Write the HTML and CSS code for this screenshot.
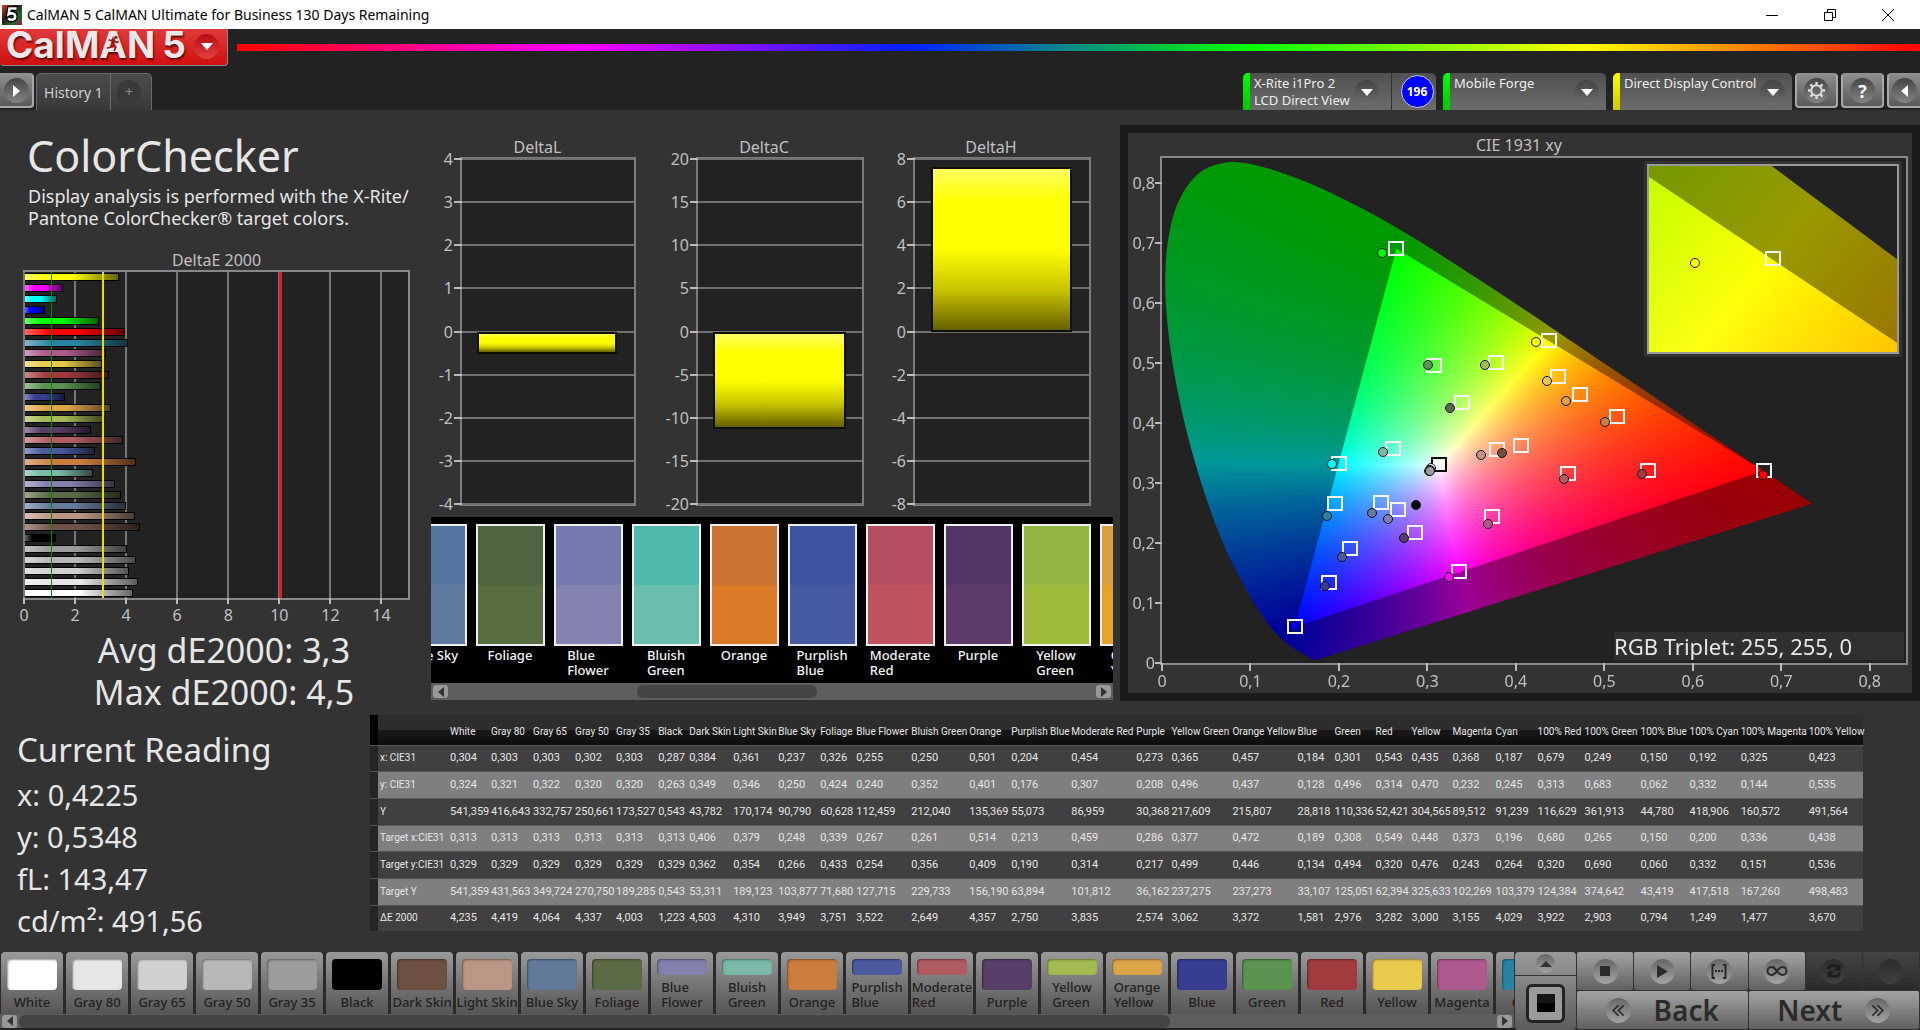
FILE: index.html
```html
<!DOCTYPE html>
<html lang="en">
<head>
<meta charset="utf-8">
<title>CalMAN 5</title>
<link rel="stylesheet" href="styles.css">
</head>
<body>
<header class="titlebar">
  <svg class="app-icon" viewBox="0 0 20 20" aria-hidden="true">
    <defs><linearGradient id="ai" x1="0" y1="0" x2="1" y2="1"><stop offset="0" stop-color="#e33a1c"/><stop offset=".4" stop-color="#2c1a16"/><stop offset=".7" stop-color="#1c6b2a"/><stop offset="1" stop-color="#a01a4a"/></linearGradient></defs>
    <rect width="20" height="20" fill="url(#ai)"/>
    <path d="M14.500 3.500H7.500L6.600 9.200c2.400-1.400 6.600-1.200 6.600 2.300 0 3.600-4.400 4.200-7 2" fill="none" stroke="#000" stroke-width="5"/>
    <path d="M14.500 3.500H7.500L6.600 9.200c2.400-1.400 6.600-1.200 6.600 2.300 0 3.600-4.400 4.200-7 2" fill="none" stroke="#fff" stroke-width="2.600"/>
  </svg>
  <span class="titlebar-text">CalMAN 5 CalMAN Ultimate for Business 130 Days Remaining</span>
  <div class="window-buttons">
    <button type="button" aria-label="Minimize"><svg viewBox="0 0 14 14"><path d="M1 7.500h12"/></svg></button>
    <button type="button" aria-label="Restore"><svg viewBox="0 0 14 14"><path d="M1.500 4.500h8v8h-8zM4.500 4.500v-3h8v8h-3"/></svg></button>
    <button type="button" aria-label="Close"><svg viewBox="0 0 14 14"><path d="M1 1l12 12M13 1L1 13"/></svg></button>
  </div>
</header>

<div class="brandbar">
  <button type="button" class="logo">
    <span class="logo-word">CalMAN</span>
    <span class="logo-five">5</span>
    <svg class="runner" viewBox="0 0 16 18" aria-hidden="true"><path d="M10 4L6 6 3.500 5M9 5L8 10l3 3-2 4M8 10l-3 3-3.500 1M9 6l3 2 2-1" fill="none" stroke="#a31515" stroke-width="1.800"/><circle cx="11" cy="2.500" r="1.800" fill="#a31515"/></svg>
    <span class="logo-drop"><span class="tri-down"></span></span>
  </button>
  <div class="spectrum"></div>
</div>

<nav class="tabbar">
  <button type="button" class="sq-btn sq-left" aria-label="Open panel"><span class="dot"><span class="tri-right"></span></span></button>
  <div class="tabs">
    <button type="button" class="tab">History 1</button>
    <button type="button" class="tab tab-add" aria-label="Add tab"><span class="add-dot">+</span></button>
  </div>
  <div class="devices">
    <div class="device device-meter">
      <i class="status status-green"></i>
      <button type="button" class="device-main"><span class="device-text">X-Rite i1Pro 2<br>LCD Direct View</span><span class="drop"><span class="tri-down"></span></span></button>
      <span class="count-cell"><span class="count">196</span></span>
    </div>
    <div class="device device-source">
      <i class="status status-green"></i>
      <button type="button" class="device-main"><span class="device-text">Mobile Forge</span><span class="drop"><span class="tri-down"></span></span></button>
    </div>
    <div class="device device-display">
      <i class="status status-yellow"></i>
      <button type="button" class="device-main"><span class="device-text">Direct Display Control</span><span class="drop"><span class="tri-down"></span></span></button>
    </div>
    <button type="button" class="sq-btn" aria-label="Settings"><span class="dot"><svg viewBox="0 0 20 20" class="gear"><circle cx="10" cy="10" r="5.500" fill="none" stroke-width="2"/><path d="M10 1v3M10 16v3M1 10h3M16 10h3M3.600 3.600l2.200 2.200M14.200 14.200l2.200 2.200M3.600 16.400l2.200-2.200M14.200 5.800l2.200-2.200" stroke-width="2.500"/></svg></span></button>
    <button type="button" class="sq-btn" aria-label="Help"><span class="dot help">?</span></button>
    <button type="button" class="sq-btn sq-right" aria-label="Collapse panel"><span class="dot"><span class="tri-left"></span></span></button>
  </div>
</nav>

<main class="workspace">
  <div class="top-row">
    <section class="summary">
      <h1>ColorChecker</h1>
      <p class="lead">Display analysis is performed with the X-Rite/<br>Pantone ColorChecker® target colors.</p>
      <h2 class="chart-title">DeltaE 2000</h2>
      <div class="de-plot" id="de-plot"></div>
      <p class="stat">Avg dE2000: 3,3</p>
      <p class="stat">Max dE2000: 4,5</p>
    </section>

    <section class="middle">
      <div class="deltas" id="deltas"></div>
      <div class="compare">
        <div class="compare-track" id="compare"></div>
        <div class="scroll compare-scroll">
          <button type="button" class="scroll-btn" aria-label="Scroll left"><span class="tri-left"></span></button>
          <div class="scroll-track"><div class="scroll-thumb"></div></div>
          <button type="button" class="scroll-btn" aria-label="Scroll right"><span class="tri-right"></span></button>
        </div>
      </div>
    </section>

    <section class="cie">
      <h2 class="chart-title">CIE 1931 xy</h2>
      <div class="cie-plot" id="cie-plot">
        <canvas id="cie-canvas"></canvas>
        <div class="cie-inset" id="cie-inset"><canvas id="inset-canvas"></canvas></div>
        <div class="triplet">RGB Triplet: 255, 255, 0</div>
      </div>
    </section>
  </div>

  <div class="bottom-row">
    <section class="reading">
      <h2>Current Reading</h2>
      <p>x: 0,4225</p>
      <p>y: 0,5348</p>
      <p>fL: 143,47</p>
      <p>cd/m²: 491,56</p>
    </section>
    <div class="table-wrap"><table class="data" id="data"></table></div>
  </div>
</main>

<footer class="dock">
  <div class="patches">
    <div class="patch-row" id="patches"></div>
    <div class="scroll patch-scroll">
      <button type="button" class="scroll-btn" aria-label="Scroll left"><span class="tri-left"></span></button>
      <div class="scroll-track"><div class="scroll-thumb"></div></div>
      <button type="button" class="scroll-btn" aria-label="Scroll right"><span class="tri-right"></span></button>
    </div>
  </div>
  <div class="current">
    <button type="button" class="current-up" aria-label="Expand"><span class="round"><span class="tri-up"></span></span></button>
    <button type="button" class="current-patch" aria-label="Current pattern"><span class="pattern"><i></i></span></button>
  </div>
  <div class="transport">
    <button type="button" aria-label="Stop"><span class="round"><svg viewBox="0 0 24 24"><path d="M7 7h10v10H7z"/></svg></span></button>
    <button type="button" aria-label="Play"><span class="round"><svg viewBox="0 0 24 24"><path d="M7 6l11 6.500L7 19z"/></svg></span></button>
    <button type="button" aria-label="Read series"><span class="round"><svg viewBox="0 0 24 24"><path d="M8 6H5.500v13H8M16 6h2.500v13H16" fill="none" stroke="#2b2b2b" stroke-width="2"/><path d="M8 11h2v2H8zM11 11h2v2h-2zM14 11h2v2h-2z"/></svg></span></button>
    <button type="button" aria-label="Read continuous"><span class="round"><svg viewBox="0 0 24 24"><path d="M12 12c-2-3-3.500-4-5.500-4a4 4 0 0 0 0 8c2 0 3.500-1 5.500-4zM12 12c2-3 3.500-4 5.500-4a4 4 0 0 1 0 8c-2 0-3.500-1-5.500-4z" fill="none" stroke="#2b2b2b" stroke-width="2"/></svg></span></button>
    <button type="button" class="off" aria-label="Refresh"><span class="round"><svg viewBox="0 0 24 24"><path d="M6 10c1-3.500 7-5 11-1.500M18 14c-1 3.500-7 5-11 1.500" fill="none" stroke="#1c1c1c" stroke-width="2.600"/><path d="M18.500 4.500v7h-7zM5.500 19.500v-7h7z" fill="#1c1c1c"/></svg></span></button>
    <button type="button" class="off" aria-label="Record"><span class="round"></span></button>
    <button type="button" class="step"><span class="round"><svg viewBox="0 0 24 24"><path d="M12 6l-6 6 6 6M18 6l-6 6 6 6" fill="none" stroke="#2b2b2b" stroke-width="2"/></svg></span><span>Back</span></button>
    <button type="button" class="step"><span>Next</span><span class="round"><svg viewBox="0 0 24 24"><path d="M12 6l6 6-6 6M6 6l6 6-6 6" fill="none" stroke="#2b2b2b" stroke-width="2"/></svg></span></button>
  </div>
</footer>
<script src="app.js"></script>
</body>
</html>
```
FILE: styles.css
```css
* { box-sizing: border-box; }
body {
  margin: 0;
  min-height: 100vh;
  display: flex;
  flex-direction: column;
  background: #333;
  color: #e6e6e6;
  font-family: "Noto Sans", "Open Sans", sans-serif;
  overflow-x: hidden;
}
button { font: inherit; color: inherit; border: 0; padding: 0; margin: 0; background: none; }
h1, h2, p { margin: 0; font-weight: 400; }

/* Title bar */
.titlebar { display: flex; align-items: center; height: 29px; background: #fff; color: #000; padding-left: 2px; }
.app-icon { width: 20px; height: 20px; margin-right: 5px; }
.titlebar-text { font: 14px/28px "Noto Sans", sans-serif; white-space: nowrap; }
.window-buttons { margin-left: auto; display: flex; padding-right: 3px; }
.window-buttons button { width: 58px; height: 28px; display: grid; place-items: center; }
.window-buttons svg { width: 14px; height: 14px; fill: none; stroke: #000; }

/* Brand bar */
.brandbar { display: flex; height: 37px; background: #222; flex: none; }
.logo {
  position: relative; width: 228px; height: 37px; display: flex; align-items: center; gap: 7px; padding-left: 6px;
  background: linear-gradient(#e03a3a, #d01010); border: solid #8a8a8a; border-width: 0 1px 1px 0; border-radius: 0 0 4px 4px;
  font: 700 37px/32px Inter, sans-serif; color: #e8e8e8; text-shadow: 1px 2px 2px #600; padding-bottom: 4px;
}
.runner { position: absolute; left: 105px; top: 6px; width: 16px; height: 17px; }
.logo-drop { margin: 2px 8px 0 auto; width: 25px; height: 25px; border-radius: 50%; background: linear-gradient(#b80c14, #e04040); display: grid; place-items: center; }
.spectrum {
  flex: 1; height: 7px; margin: 15px 0 0 9px;
  background: linear-gradient(90deg, #f00, #f0f 20%, #0020ff 40%, #0f0 60%, #ff0 80%, #f00);
}

.tri-down, .tri-up, .tri-left, .tri-right { display: block; width: 0; height: 0; border: 6px solid transparent; }
.tri-down { border-top: 7px solid #fff; border-bottom: 0; }
.tri-up { border-bottom: 6px solid #333; border-top: 0; }
.tri-left { border-right: 7px solid #fff; border-left: 0; }
.tri-right { border-left: 7px solid #fff; border-right: 0; }

/* Tab bar */
.tabbar { display: flex; align-items: flex-end; height: 44px; background: #222; flex: none; font-size: 14px; }
.sq-btn {
  width: 43px; height: 35px; margin-bottom: 2px; border: 2px solid #a8a8a8; border-top-color: #909090; border-radius: 4px;
  background: linear-gradient(#8c8c8c, #5a5a5a); display: grid; place-items: center;
}
.sq-left { width: 34px; border-left: 0; border-radius: 0 4px 4px 0; }
.sq-right { width: 33px; border-right: 0; border-radius: 4px 0 0 4px; }
.dot { width: 25px; height: 25px; border-radius: 50%; background: linear-gradient(#444, #858585); display: grid; place-items: center; }
.help { font: 700 18px/24px "Open Sans", sans-serif; color: #fff; }
.gear { width: 19px; height: 19px; stroke: #ddd; fill: none; }
.tabs { display: flex; margin-left: 2px; border: 1px solid #6a6a6a; border-bottom: 0; border-radius: 5px 5px 0 0; background: linear-gradient(#4c4c4c, #393939); height: 37px; }
.tab { width: 73px; line-height: 38px; color: #d0d0d0; }
.tab-add { width: 41px; padding-right: 4px; border-left: 1px solid #6a6a6a; display: grid; place-items: center; }
.add-dot { width: 24px; height: 24px; border-radius: 50%; background: #393939; line-height: 23px; color: #8a8a8a; }
.devices { display: flex; align-items: flex-end; margin-left: auto; gap: 3px; }
.device { display: flex; height: 37px; border-radius: 5px 5px 0 0; overflow: hidden; background: linear-gradient(#505050, #6c6c6c); margin-right: 4px; }
.device-meter { width: 193px; }
.device-source { width: 163px; }
.device-display { width: 179px; margin-right: 0; }
.status { width: 7px; flex: none; }
.status-green { background: linear-gradient(#0f0, #00c800); }
.status-yellow { background: linear-gradient(#ff0, #d0c800); }
.device-main { display: flex; flex: 1; justify-content: space-between; align-items: flex-start; padding: 2px 7px 0 4px; text-align: left; font-size: 13px; line-height: 17px; color: #eee; white-space: nowrap; }
.device-meter .device-main { padding-right: 12px; }
.drop { width: 25px; height: 25px; margin-top: 5px; border-radius: 50%; background: linear-gradient(#444, #6c6c6c); display: grid; place-items: center; }
.device-text { margin-right: -6px; }
.count-cell { width: 45px; padding-left: 6px; border-left: 1px solid #333; display: grid; place-items: center; }
.count { width: 33px; height: 33px; border-radius: 50%; border: 1px solid #ccc; background: #00f; color: #fff; font: 700 12px/31px "Noto Sans", sans-serif; text-align: center; }

/* Workspace */
.workspace { flex: 1; display: flex; flex-direction: column; }
.top-row { display: grid; grid-template-columns: minmax(0, 431fr) minmax(0, 689fr) minmax(0, 800fr); }
.chart-title { font-size: 16px; line-height: 20px; text-align: center; color: #c0c0c0; }

.summary { padding: 22px 21px 0 23px; }
.summary h1 { font-size: 43px; line-height: 48px; margin-left: 4px; }
.lead { font-size: 18px; line-height: 22px; margin: 5px 0 21px 5px; white-space: nowrap; }
.de-plot { position: relative; height: 330px; border: 2px solid #888; background: #222; margin-bottom: 29px; }
.de-bars { position: absolute; inset: 0; display: grid; grid-template-rows: repeat(30, 1fr); align-items: center; }
.de-bar { height: 8px; border: 1px solid #000; border-left: 0; background-image: linear-gradient(90deg, #fff6, transparent 25%, transparent 50%, #0009); }
.gl { position: absolute; top: 0; bottom: 0; width: 2px; margin-left: -2px; background: #777; }
.gl::after { content: ""; position: absolute; top: 100%; left: 0; width: 2px; height: 6px; background: #bbb; }
.gl b { position: absolute; top: 100%; left: -19px; width: 40px; margin-top: 7px; text-align: center; font-weight: 400; font-size: 16px; line-height: 20px; color: #c0c0c0; }
.lim { position: absolute; top: 0; bottom: 0; }
.lim-green { width: 1px; background: #008a00; }
.lim-yellow { width: 2px; background: #e8e000; }
.lim-red { width: 3px; margin-left: -1px; background: #d82020; }
.stat { font-size: 34px; line-height: 42px; text-align: center; white-space: nowrap; margin-left: 24px; margin-right: 9px; }

.middle { padding: 27px 7px 0 0; display: flex; flex-direction: column; }
.deltas { display: grid; grid-template-columns: 213fr 240fr 229fr; }
.delta:nth-child(1) .delta-plot { margin: 0 8px 0 29px; }
.delta:nth-child(2) .delta-plot { margin: 0 20px 0 52px; }
.delta:nth-child(3) .delta-plot { margin: 0 7px 0 29px; }
.delta:nth-child(3) { padding-right: 15px; }
.delta-plot { position: relative; height: 349px; border: 2px solid #7c7c7c; background: #222; }
.hl { position: absolute; left: -8px; right: 0; height: 2px; margin-top: -1px; background: linear-gradient(90deg, #bbb 8px, #707070 8px); }
.hl b { position: absolute; right: 100%; top: -9px; padding-right: 1px; font-weight: 400; font-size: 16px; line-height: 20px; color: #c0c0c0; }
.delta-bar { position: absolute; left: 9%; right: 10%; border: 2px solid #101000; background: linear-gradient(#ffff60, #ff0 20%, #ff0 50%, #c8c400 75%, #666000); }

.compare { margin-top: 11px; background: #000; overflow: hidden; }
.compare-track { display: flex; height: 166px; padding-top: 7px; margin-left: -38px; }
.compare-item { flex: none; width: 78px; display: flex; flex-direction: column; align-items: center; }
.compare-chip { width: 69px; height: 122px; border: 2px solid #eee; margin-bottom: 2px; }
.compare-item span { font-size: 13px; line-height: 15px; color: #f4f4f4; font-weight: 500; }
.scroll { display: flex; align-items: center; background: #5e5e5e; }
.compare-scroll { height: 17px; }
.scroll-btn { width: 15px; height: 13px; margin: 0 2px; border-radius: 3px; background: #999; display: grid; place-items: center; }
.scroll-btn .tri-left { border-right-color: #333; border-width: 5px 6px 5px 0; }
.scroll-btn .tri-right { border-left-color: #333; border-width: 5px 0 5px 6px; }
.scroll-track { flex: 1; }
.scroll-thumb { height: 13px; border-radius: 6px; background: #444; }
.compare-scroll .scroll-thumb { width: 28%; margin-left: 29%; }

.cie { margin-top: 15px; border: 8px solid #1b1b1b; padding: 1px 4px 28px 32px; display: flex; flex-direction: column; align-self: start; }
.cie .chart-title { line-height: 22px; margin-right: 30px; }
.cie-plot { position: relative; height: 509px; border: 2px solid #888; background: #222; }
.cie-plot > canvas, .cie-inset > canvas { display: block; width: 100%; height: 100%; }
.ax { position: absolute; background: #bbb; }
.ax b { position: absolute; font-weight: 400; font-size: 16px; line-height: 20px; color: #c0c0c0; }
.ax-x { top: 100%; width: 2px; height: 8px; margin-left: -1px; }
.ax-x b { top: 8px; left: -19px; width: 40px; text-align: center; }
.ax-y { right: 100%; height: 2px; width: 7px; margin-top: -1px; }
.ax-y b { right: 7px; top: -9px; }
.cie-inset { position: absolute; right: 4px; top: 3px; width: 258px; height: 196px; border: 3px solid #333; }
.cie-inset > canvas { border: 2px solid #999; background: #222; }
.triplet { position: absolute; right: 2px; bottom: 3px; width: 290px; background: #303030; font-size: 22px; line-height: 28px; }
.square { position: absolute; width: 16px; height: 15px; margin: -8px 0 0 -8px; border: 2px solid #f4f4f4; }
.square-dark { border-color: #000; }
.spot { position: absolute; width: 10px; height: 10px; margin: -5px 0 0 -5px; border: 1px solid #111; border-radius: 50%; }

.bottom-row { display: flex; }
.reading { flex: none; width: 370px; padding: 16px 0 0 17px; white-space: nowrap; }
.reading h2 { font-size: 33px; line-height: 42px; }
.reading p { font-size: 29px; line-height: 42px; }
.reading h2 + p { margin-top: 3px; }
.table-wrap { flex: 1; padding: 2px 57px 0 0; }
.data { width: 100%; height: 216px; table-layout: fixed; border-collapse: collapse; font: 11px/16px Roboto, "Noto Sans", sans-serif; white-space: nowrap; }
.data th, .data td { padding: 0 0 0 2px; text-align: left; font-weight: 400; overflow: visible; }
.data th { font-size: 10px; }
.data thead tr { height: 30px; background: linear-gradient(#2d2d2d 50%, #181818 50%, #0e0e0e); }
.data thead th { padding-top: 4px; }
.data tbody tr { background: #404040; border-top: 1px solid #555; }
.data tbody tr:nth-child(even) { background: #7f7f7f; }
.data .grip { background: #252525; }
.data thead .grip { background: #000; }

/* Dock */
.dock { display: flex; height: 78px; flex: none; background: #333; }
.patches { flex: 1; min-width: 0; display: flex; flex-direction: column; }
.patch-row { display: flex; gap: 3px; height: 62px; overflow: hidden; padding-left: 1px; background: #2a2a2a; }
.patch {
  flex: none; width: 62px; height: 62px; border-radius: 4px 4px 0 0; background: linear-gradient(#999, #555);
  display: flex; flex-direction: column; align-items: center; padding-top: 7px; color: #222; font-size: 13px; line-height: 15px; font-weight: 500; white-space: nowrap;
}
.patch i { width: 50px; flex: 1; border-radius: 4px; box-shadow: inset 1px 1px 2px #0006; margin-bottom: 5px; }
.patch span { padding-bottom: 4px; text-align: left; }
.patch-scroll { flex: 1; border-bottom: 2px solid #222; }
.patch-scroll .scroll-thumb { width: 78%; }
.current { width: 63px; display: flex; flex-direction: column; gap: 1px; background: #333; padding: 0 1px; }
.current button { display: grid; place-items: center; background: linear-gradient(#999, #888); border-radius: 4px 4px 0 0; }
.current-up { height: 23px; }
.current .current-patch { flex: 1; background: linear-gradient(#888, #5c5c5c); border-radius: 0 0 4px 4px; }
.round { width: 25px; height: 25px; border-radius: 50%; background: linear-gradient(#666, #a4a4a4); display: grid; place-items: center; }
.current .round { width: 19px; height: 19px; }
.round svg { width: 24px; height: 24px; fill: #2b2b2b; }
.pattern { width: 39px; height: 39px; border: 3px solid #222; border-radius: 6px; background: #9a9a9a; display: grid; place-items: center; }
.pattern i { width: 18px; height: 18px; background: linear-gradient(#161616 50%, #000 50%); }
.transport { width: 343px; display: grid; grid-template-columns: repeat(6, 1fr); grid-template-rows: 38px 38px; gap: 1px; padding-right: 1px; background: #333; }
.transport button { display: grid; place-items: center; background: linear-gradient(#a4a4a4, #606060); border-radius: 2px; }
.transport .off { background: linear-gradient(#444, #2a2a2a); }
.transport .off .round { background: linear-gradient(#2c2c2c, #404040); }
.transport .step { grid-column: span 3; display: flex; align-items: center; justify-content: center; gap: 23px; font: 600 28px/36px "Noto Sans", sans-serif; color: #2b2b2b; }
.step .round svg { width: 21px; height: 21px; }
```
FILE: app.js
```js
// name, chart colour, column width, measured x y Y, target x y Y, dE
const rows = [
  ['White', '#ffffff', 41, '0,304', '0,324', '541,359', '0,313', '0,329', '541,359', '4,235'],
  ['Gray 80', '#e6e6e6', 42, '0,303', '0,321', '416,643', '0,313', '0,329', '431,563', '4,419'],
  ['Gray 65', '#d0d0d0', 42, '0,303', '0,322', '332,757', '0,313', '0,329', '349,724', '4,064'],
  ['Gray 50', '#b8b8b8', 41, '0,302', '0,320', '250,661', '0,313', '0,329', '270,750', '4,337'],
  ['Gray 35', '#9c9c9c', 42, '0,303', '0,320', '173,527', '0,313', '0,329', '189,285', '4,003'],
  ['Black', '#000000', 31, '0,287', '0,263', '0,543', '0,313', '0,329', '0,543', '1,223'],
  ['Dark Skin', '#6e5044', 44, '0,384', '0,349', '43,782', '0,406', '0,362', '53,311', '4,503'],
  ['Light Skin', '#ba9684', 45, '0,361', '0,346', '170,174', '0,379', '0,354', '189,123', '4,310'],
  ['Blue Sky', '#647a9a', 42, '0,237', '0,250', '90,790', '0,248', '0,266', '103,877', '3,949'],
  ['Foliage', '#5b6b45', 36, '0,326', '0,424', '60,628', '0,339', '0,433', '71,680', '3,751'],
  ['Blue Flower', '#8380ab', 55, '0,255', '0,240', '112,459', '0,267', '0,254', '127,715', '3,522'],
  ['Bluish Green', '#7ab9a8', 58, '0,250', '0,352', '212,040', '0,261', '0,356', '229,733', '2,649'],
  ['Orange', '#cb7d3e', 42, '0,501', '0,401', '135,369', '0,514', '0,409', '156,190', '4,357'],
  ['Purplish Blue', '#4b5b9e', 60, '0,204', '0,176', '55,073', '0,213', '0,190', '63,894', '2,750'],
  ['Moderate Red', '#b15b63', 65, '0,454', '0,307', '86,959', '0,459', '0,314', '101,812', '3,835'],
  ['Purple', '#583f68', 35, '0,273', '0,208', '30,368', '0,286', '0,217', '36,162', '2,574'],
  ['Yellow Green', '#a4bb53', 61, '0,365', '0,496', '217,609', '0,377', '0,499', '237,275', '3,062'],
  ['Orange Yellow', '#dca548', 65, '0,457', '0,437', '215,807', '0,472', '0,446', '237,273', '3,372'],
  ['Blue', '#373d90', 37, '0,184', '0,128', '28,818', '0,189', '0,134', '33,107', '1,581'],
  ['Green', '#5b9450', 41, '0,301', '0,496', '110,336', '0,308', '0,494', '125,051', '2,976'],
  ['Red', '#a13b3e', 36, '0,543', '0,314', '52,421', '0,549', '0,320', '62,394', '3,282'],
  ['Yellow', '#e8ca4c', 41, '0,435', '0,470', '304,565', '0,448', '0,476', '325,633', '3,000'],
  ['Magenta', '#ae5a8f', 43, '0,368', '0,232', '89,512', '0,373', '0,243', '102,269', '3,155'],
  ['Cyan', '#2884a2', 42, '0,187', '0,245', '91,239', '0,196', '0,264', '103,379', '4,029'],
  ['100% Red', '#ff0000', 47, '0,679', '0,313', '116,629', '0,680', '0,320', '124,384', '3,922'],
  ['100% Green', '#00ff00', 56, '0,249', '0,683', '361,913', '0,265', '0,690', '374,642', '2,903'],
  ['100% Blue', '#0000ff', 49, '0,150', '0,062', '44,780', '0,150', '0,060', '43,419', '0,794'],
  ['100% Cyan', '#00ffff', 51, '0,192', '0,332', '418,906', '0,200', '0,332', '417,518', '1,249'],
  ['100% Magenta', '#ff00ff', 68, '0,325', '0,144', '160,572', '0,336', '0,151', '167,260', '1,477'],
  ['100% Yellow', '#ffff00', 56, '0,423', '0,535', '491,564', '0,438', '0,536', '498,483', '3,670']
];
const num = s => parseFloat(s.replace(',', '.'));
const byId = id => document.getElementById(id);

// Data table
const labels = ['x: CIE31', 'y: CIE31', 'Y', 'Target x:CIE31', 'Target y:CIE31', 'Target Y', 'ΔE 2000'];
const total = rows.reduce((s, r) => s + r[2], 78);
const pc = w => (w / total * 100).toFixed(3) + '%';
byId('data').innerHTML =
  `<colgroup><col style="width:${pc(8)}"><col style="width:${pc(70)}">` +
  rows.map(r => `<col style="width:${pc(r[2])}">`).join('') + '</colgroup>' +
  '<thead><tr><th class="grip"></th><th></th>' + rows.map(r => `<th scope="col">${r[0]}</th>`).join('') + '</tr></thead><tbody>' +
  labels.map((l, i) => `<tr><td class="grip"></td><th scope="row">${l}</th>` + rows.map(r => `<td>${r[i + 3]}</td>`).join('') + '</tr>').join('') +
  '</tbody>';

// DeltaE bars
let de = '';
for (let v = 0; v <= 14; v += 2) de += `<span class="gl" style="left:${v / 15 * 100}%"><b>${v}</b></span>`;
de += '<div class="de-bars">' + rows.slice().reverse().map(r =>
  `<div class="de-bar" style="width:${(num(r[9]) / 15 * 100).toFixed(2)}%;background-color:${r[1]}"></div>`).join('') + '</div>';
de += [[1, 'green'], [3, 'yellow'], [10, 'red']].map(l => `<span class="lim lim-${l[1]}" style="left:${l[0] / 15 * 100}%"></span>`).join('');
byId('de-plot').innerHTML = de;

// DeltaL / DeltaC / DeltaH
byId('deltas').innerHTML = [['DeltaL', 4, 1, -0.52], ['DeltaC', 20, 5, -11.25], ['DeltaH', 8, 2, 7.65]].map(([name, max, step, v]) => {
  let s = '';
  for (let k = max; k >= -max; k -= step) s += `<span class="hl" style="top:${(max - k) / (2 * max) * 100}%"><b>${k}</b></span>`;
  const top = (max - Math.max(v, 0)) / (2 * max) * 100, h = Math.abs(v) / (2 * max) * 100;
  return `<div class="delta"><h2 class="chart-title">${name}</h2><div class="delta-plot">${s}<div class="delta-bar" style="top:${top}%;height:${h}%"></div></div></div>`;
}).join('');

// Actual / target comparison chips
byId('compare').innerHTML = [
  ['Blue Sky', '#53759f', '#5e7c9f'], ['Foliage', '#4d6641', '#596e40'], ['Blue<br>Flower', '#757bae', '#8482b0'],
  ['Bluish<br>Green', '#4fb9ab', '#69beae'], ['Orange', '#c97231', '#dc7926'], ['Purplish<br>Blue', '#3d54a0', '#465ba3'],
  ['Moderate<br>Red', '#b54e5e', '#c15360'], ['Purple', '#523766', '#5c3b6a'], ['Yellow<br>Green', '#92b643', '#9fbb3b'],
  ['Orange<br>Yellow', '#d79f3d', '#e6a229']
].map(c => `<div class="compare-item"><div class="compare-chip" style="background:linear-gradient(${c[1]} 50%,${c[2]} 50%)"></div><span>${c[0]}</span></div>`).join('');

// Patch buttons
const wrap = ['Blue Flower', 'Bluish Green', 'Purplish Blue', 'Moderate Red', 'Yellow Green', 'Orange Yellow'];
byId('patches').innerHTML = rows.slice(0, 24).map(r =>
  `<button type="button" class="patch"><i style="background:${r[1]}"></i><span>${wrap.includes(r[0]) ? r[0].replace(' ', '<br>') : r[0]}</span></button>`).join('');

// Chromaticity diagram
const locus = [[.1741,.0050],[.1714,.0051],[.1644,.0109],[.1566,.0177],[.1440,.0297],[.1355,.0399],[.1241,.0578],[.1096,.0868],[.0913,.1327],[.0687,.2007],[.0454,.2950],[.0235,.4127],[.0082,.5384],[.0039,.6548],[.0139,.7502],[.0389,.8120],[.0743,.8338],[.1142,.8262],[.1547,.8059],[.1929,.7816],[.2296,.7543],[.2658,.7243],[.3016,.6923],[.3731,.6245],[.4441,.5547],[.5125,.4866],[.5752,.4242],[.6270,.3725],[.6658,.3340],[.6915,.3083],[.7190,.2809],[.7347,.2653]];
const gamut = [[.68, .32], [.265, .69], [.15, .06]];
function toRgb(x, y) {
  y = Math.max(y, 1e-4);
  const X = x / y, Z = (1 - x - y) / y;
  const c = [
    2.493497 * X - 0.931384 - 0.402711 * Z,
    -0.829489 * X + 1.762664 + 0.023625 * Z,
    0.035846 * X - 0.076172 + 0.956885 * Z
  ].map(v => Math.max(v, 0));
  const m = Math.max(...c);
  return c.map(v => 255 * v / m);
}
function drawCie(canvas, x0, x1, y0, y1) {
  const w = canvas.width = canvas.clientWidth, h = canvas.height = canvas.clientHeight;
  const ctx = canvas.getContext('2d');
  const P = p => [(p[0] - x0) / (x1 - x0) * w, (y1 - p[1]) / (y1 - y0) * h];
  const layer = k => {
    const off = document.createElement('canvas');
    off.width = w; off.height = h;
    const o = off.getContext('2d'), img = o.createImageData(w, h);
    for (let j = 0, i = 0; j < h; j++) for (let n = 0; n < w; n++, i += 4) {
      const c = toRgb(x0 + (n + .5) / w * (x1 - x0), y1 - (j + .5) / h * (y1 - y0));
      img.data[i] = c[0] * k; img.data[i + 1] = c[1] * k; img.data[i + 2] = c[2] * k; img.data[i + 3] = 255;
    }
    o.putImageData(img, 0, 0);
    return off;
  };
  const L = locus.map(P);
  ctx.save();
  ctx.beginPath();
  ctx.moveTo(...L[0]);
  for (let i = 0; i < L.length - 1; i++) {
    const a = L[Math.max(i - 1, 0)], b = L[i], c = L[i + 1], d = L[Math.min(i + 2, L.length - 1)];
    ctx.bezierCurveTo(b[0] + (c[0] - a[0]) / 6, b[1] + (c[1] - a[1]) / 6, c[0] - (d[0] - b[0]) / 6, c[1] - (d[1] - b[1]) / 6, c[0], c[1]);
  }
  ctx.closePath();
  ctx.clip();
  ctx.drawImage(layer(.6), 0, 0);
  ctx.restore();
  ctx.save();
  ctx.beginPath();
  gamut.map(P).forEach((p, i) => i ? ctx.lineTo(...p) : ctx.moveTo(...p));
  ctx.closePath();
  ctx.clip();
  ctx.drawImage(layer(1), 0, 0);
  ctx.restore();
}
const R = .841;
drawCie(byId('cie-canvas'), 0, R, 0, R);
drawCie(byId('inset-canvas'), .413, .463, .511, .561);

const at = (x, y) => `left:${(x / R * 100).toFixed(2)}%;top:${(100 - y / R * 100).toFixed(2)}%`;
let marks = '';
rows.forEach((r, i) => { marks += `<i class="square${i < 6 ? ' square-dark' : ''}" style="${at(num(r[6]), num(r[7]))}"></i>`; });
rows.forEach(r => { marks += `<i class="spot" style="${at(num(r[3]), num(r[4]))};background:${r[1]}"></i>`; });
for (let k = 0; k <= 8; k++) {
  const t = k ? '0,' + k : '0';
  marks += `<span class="ax ax-x" style="left:${k / 10 / R * 100}%"><b>${t}</b></span><span class="ax ax-y" style="top:${100 - k / 10 / R * 100}%"><b>${t}</b></span>`;
}
byId('cie-plot').insertAdjacentHTML('beforeend', marks);
byId('cie-inset').insertAdjacentHTML('beforeend', '<i class="square" style="left:50%;top:50%"></i><i class="spot" style="left:19%;top:52%;background:#ff0"></i>');
```
